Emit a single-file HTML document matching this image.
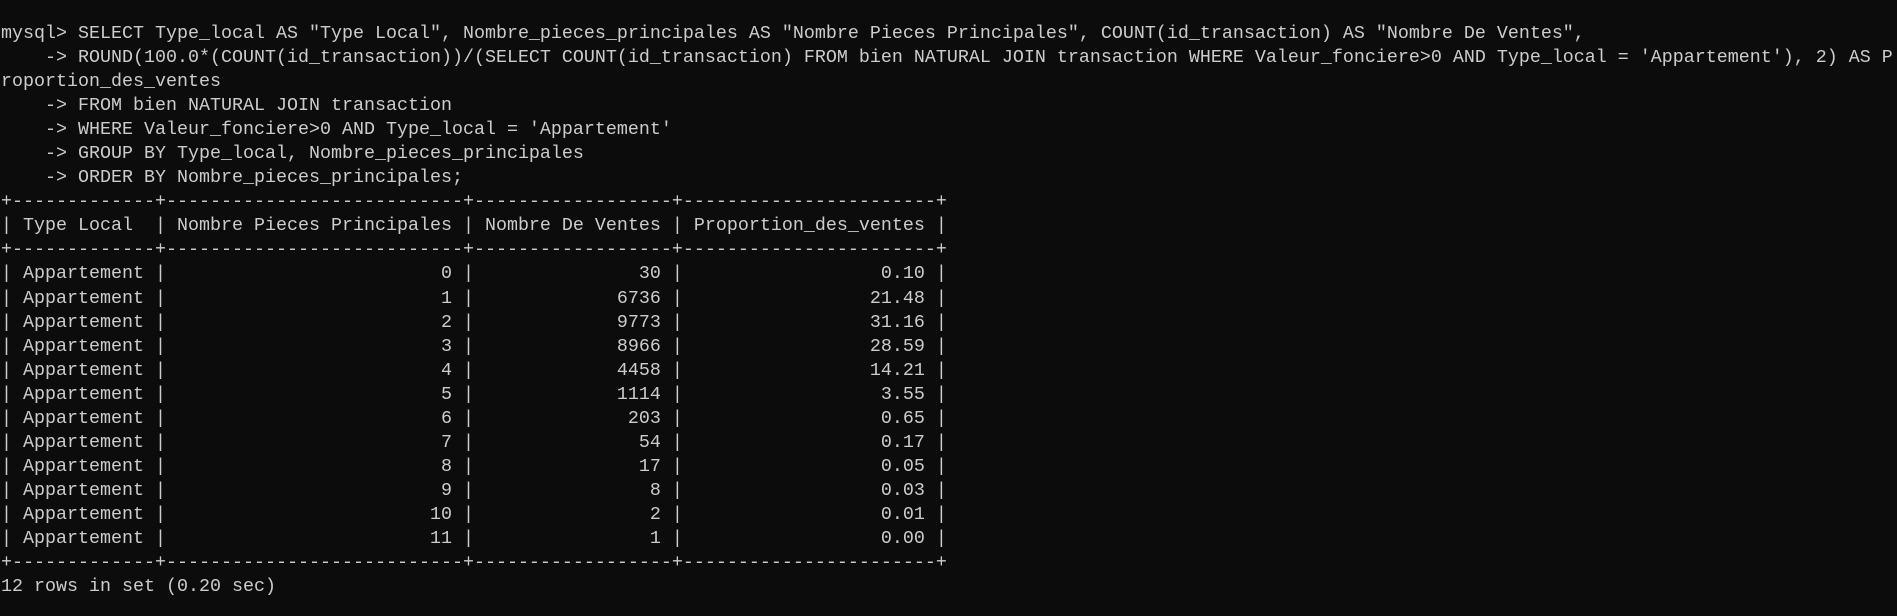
<!DOCTYPE html>
<html><head><meta charset="utf-8"><style>
html,body{margin:0;padding:0;background:#0c0c0c;width:1897px;height:616px;overflow:hidden}
pre{margin:0;padding:22px 0 0 1px;font-family:"Liberation Mono",monospace;font-size:18.33px;line-height:24.05px;color:#cccccc;white-space:pre}
</style></head><body><pre>mysql&gt; SELECT Type_local AS "Type Local", Nombre_pieces_principales AS "Nombre Pieces Principales", COUNT(id_transaction) AS "Nombre De Ventes",
    -&gt; ROUND(100.0*(COUNT(id_transaction))/(SELECT COUNT(id_transaction) FROM bien NATURAL JOIN transaction WHERE Valeur_fonciere&gt;0 AND Type_local = 'Appartement'), 2) AS P
roportion_des_ventes
    -&gt; FROM bien NATURAL JOIN transaction
    -&gt; WHERE Valeur_fonciere&gt;0 AND Type_local = 'Appartement'
    -&gt; GROUP BY Type_local, Nombre_pieces_principales
    -&gt; ORDER BY Nombre_pieces_principales;
+-------------+---------------------------+------------------+-----------------------+
| Type Local  | Nombre Pieces Principales | Nombre De Ventes | Proportion_des_ventes |
+-------------+---------------------------+------------------+-----------------------+
| Appartement |                         0 |               30 |                  0.10 |
| Appartement |                         1 |             6736 |                 21.48 |
| Appartement |                         2 |             9773 |                 31.16 |
| Appartement |                         3 |             8966 |                 28.59 |
| Appartement |                         4 |             4458 |                 14.21 |
| Appartement |                         5 |             1114 |                  3.55 |
| Appartement |                         6 |              203 |                  0.65 |
| Appartement |                         7 |               54 |                  0.17 |
| Appartement |                         8 |               17 |                  0.05 |
| Appartement |                         9 |                8 |                  0.03 |
| Appartement |                        10 |                2 |                  0.01 |
| Appartement |                        11 |                1 |                  0.00 |
+-------------+---------------------------+------------------+-----------------------+
12 rows in set (0.20 sec)
</pre></body></html>
